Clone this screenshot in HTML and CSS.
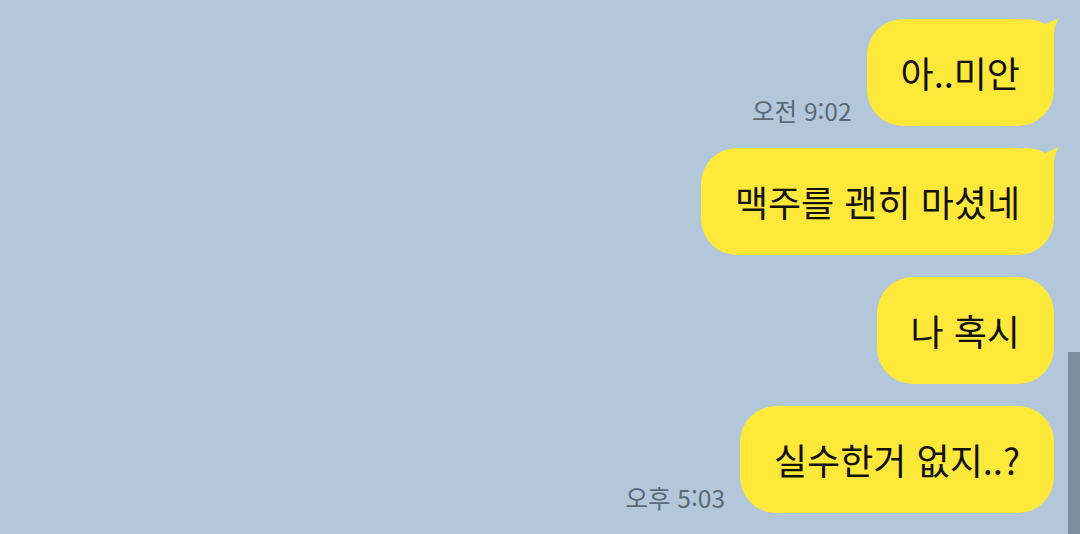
FILE: index.html
```html
<!DOCTYPE html>
<html lang="ko">
<head>
  <meta charset="UTF-8">
  <meta name="viewport" content="width=device-width, initial-scale=1.0">
  <title>채팅</title>
  <link rel="stylesheet" href="styles.css">
</head>
<body>
  <div id="chat">
    <div class="row">
      <span class="time">오전 9:02</span>
      <div class="bubble tail">아..미안
        <svg class="tail-shape" width="36" height="40" viewBox="0 0 36 40"><path d="M0 1 C10 1 16 3 21 6 C26 4 31 2 35 0 C32 5 30 10 30 18 V40 H0 Z"/></svg>
      </div>
    </div>
    <div class="row">
      <div class="bubble tail">맥주를 괜히 마셨네
        <svg class="tail-shape" width="36" height="40" viewBox="0 0 36 40"><path d="M0 1 C10 1 16 3 21 6 C26 4 31 2 35 0 C32 5 30 10 30 18 V40 H0 Z"/></svg>
      </div>
    </div>
    <div class="row">
      <div class="bubble">나 혹시</div>
    </div>
    <div class="row">
      <span class="time">오후 5:03</span>
      <div class="bubble">실수한거 없지..?</div>
    </div>
  </div>
  <div class="scrollbar"></div>
</body>
</html>
```

FILE: styles.css
```css
body {
  margin: 0;
  padding: 0;
  height: 534px;
  overflow: hidden;
  background-color: #b2c7da;
  font-family: 'Noto Sans CJK KR', 'Noto Sans', sans-serif;
}

#chat {
  display: flex;
  flex-direction: column;
  align-items: flex-end;
  gap: 22px;
  padding: 19px 26px 0 0;
}

.row {
  display: flex;
  align-items: flex-end;
  gap: 15px;
}

.time {
  font-size: 24.5px;
  line-height: 30px;
  color: #5a6978;
  margin-bottom: 0;
}

.bubble {
  position: relative;
  background-color: #fee93a;
  color: #111;
  font-size: 36px;
  line-height: 48px;
  padding: 29px 34px 30px;
  border-radius: 36px;
}

.tail-shape {
  position: absolute;
  top: -1px;
  right: -6px;
  fill: #fee93a;
}

.scrollbar {
  position: fixed;
  right: 0;
  bottom: 0;
  width: 12px;
  height: 182px;
  background-color: #7f8e9c;
}
```
